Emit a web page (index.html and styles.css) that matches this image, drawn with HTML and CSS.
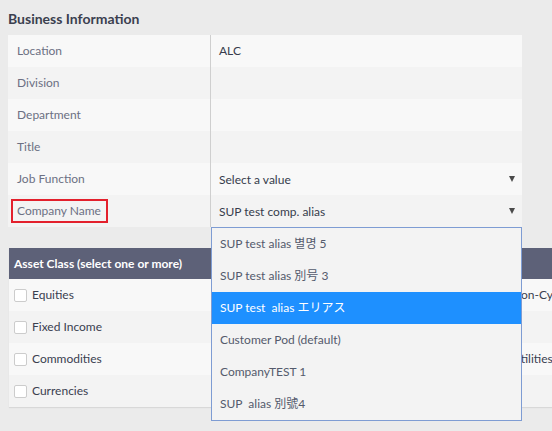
FILE: index.html
```html
<!DOCTYPE html>
<html>
<head>
<meta charset="utf-8">
<link rel="stylesheet" href="styles.css">
</head>
<body>
<div class="page">
  <div class="title">Business Information</div>
  <div class="info-table">
    <div class="row odd"><div class="label">Location</div><div class="value">ALC</div></div>
    <div class="row even"><div class="label">Division</div><div class="value"></div></div>
    <div class="row odd"><div class="label">Department</div><div class="value"></div></div>
    <div class="row even"><div class="label">Title</div><div class="value"></div></div>
    <div class="row odd"><div class="label">Job Function</div><div class="value select"><span>Select a value</span><span class="arrow"></span></div></div>
    <div class="row even"><div class="label"><span class="highlight-box">Company Name</span></div><div class="value select"><span>SUP test comp. alias</span><span class="arrow"></span></div></div>
  </div>

  <div class="asset">
    <div class="asset-head">Asset Class (select one or more)</div>
    <div class="asset-row odd">
      <label class="check"><span class="box"></span>Equities</label>
      <label class="check"><span class="box"></span>Non-Cyc</label>
    </div>
    <div class="asset-row even">
      <label class="check"><span class="box"></span>Fixed Income</label>
      <label class="check"></label>
    </div>
    <div class="asset-row odd">
      <label class="check"><span class="box"></span>Commodities</label>
      <label class="check"><span class="box"></span>Utilities</label>
    </div>
    <div class="asset-row even">
      <label class="check"><span class="box"></span>Currencies</label>
      <label class="check"></label>
    </div>
  </div>

  <ul class="dropdown">
    <li lang="ko">SUP test alias 별명 5</li>
    <li lang="ja">SUP test alias 別号 3</li>
    <li lang="ja" class="active">SUP test&nbsp; alias エリアス</li>
    <li>Customer Pod (default)</li>
    <li>CompanyTEST 1</li>
    <li lang="zh-Hant">SUP&nbsp; alias 別號4</li>
  </ul>
</div>
</body>
</html>
```
FILE: styles.css
```css
html, body {
  margin: 0;
  padding: 0;
  overflow: hidden;
}
body {
  background: #ebebeb;
  font-family: Lato, "Noto Sans CJK JP", "Noto Sans CJK KR", "Noto Sans CJK TC", sans-serif;
  font-size: 12px;
  color: #333a4a;
  width: 552px;
  height: 431px;
}
.page {
  position: relative;
  padding: 0 0 0 8px;
}
.title {
  padding-top: 11px;
  line-height: 16px;
  font-size: 14px;
  font-weight: 700;
  color: #3b3f4f;
  margin-bottom: 8px;
}
.info-table {
  width: 514px;
}
.row {
  display: grid;
  grid-template-columns: 203px 1fr;
  height: 32px;
  line-height: 31px;
}
.odd { background: #f8f8f8; }
.even { background: #f3f3f3; }
.label {
  padding-left: 9px;
  color: #6c7083;
  border-right: 1px solid #cfcfcf;
}
.value {
  padding-left: 8px;
  color: #363c4c;
}
.select {
  display: flex;
  justify-content: space-between;
  align-items: center;
  padding-right: 7px;
}
.arrow {
  width: 0;
  height: 0;
  border-left: 3px solid transparent;
  border-right: 3px solid transparent;
  border-top: 6px solid #4a4a4a;
}
.highlight-box {
  display: inline-block;
  margin-left: -6px;
  padding: 0 5px 0 4px;
  line-height: 20px;
  border: 2px solid #e3202c;
  vertical-align: middle;
  position: relative;
  top: -1px;
}
.asset {
  margin-top: 21px;
  margin-left: 1px;
  width: 560px;
  box-shadow: 0 1px 1px rgba(0,0,0,0.08);
}
.asset-head {
  background: #5d6178;
  color: #ffffff;
  font-weight: 700;
  height: 31px;
  line-height: 31px;
  padding-left: 5px;
}
.asset-row {
  display: grid;
  grid-template-columns: 480px 1fr;
  height: 32px;
  line-height: 32px;
  padding-left: 5px;
}
.check {
  display: flex;
  align-items: center;
  gap: 5px;
  color: #3a4050;
  white-space: nowrap;
}
.box {
  width: 11px;
  height: 11px;
  background: #ffffff;
  border: 1px solid #cccccc;
  border-radius: 2px;
}
.dropdown {
  position: absolute;
  left: 211px;
  top: 227px;
  width: 309px;
  margin: 0;
  padding: 0;
  list-style: none;
  background: #f3f3f3;
  border: 1px solid #7e9cd3;
}
.dropdown li {
  height: 32px;
  line-height: 32px;
  padding-left: 8px;
  color: #545a6c;
  white-space: pre;
}
.dropdown li[lang="ko"] { font-family: Lato, "Noto Sans CJK KR", sans-serif; }
.dropdown li[lang="ja"] { font-family: Lato, "Noto Sans CJK JP", sans-serif; }
.dropdown li[lang="zh-Hant"] { font-family: Lato, "Noto Sans CJK TC", sans-serif; }
.dropdown li.active {
  background: #1e90ff;
  color: #ffffff;
}
```
